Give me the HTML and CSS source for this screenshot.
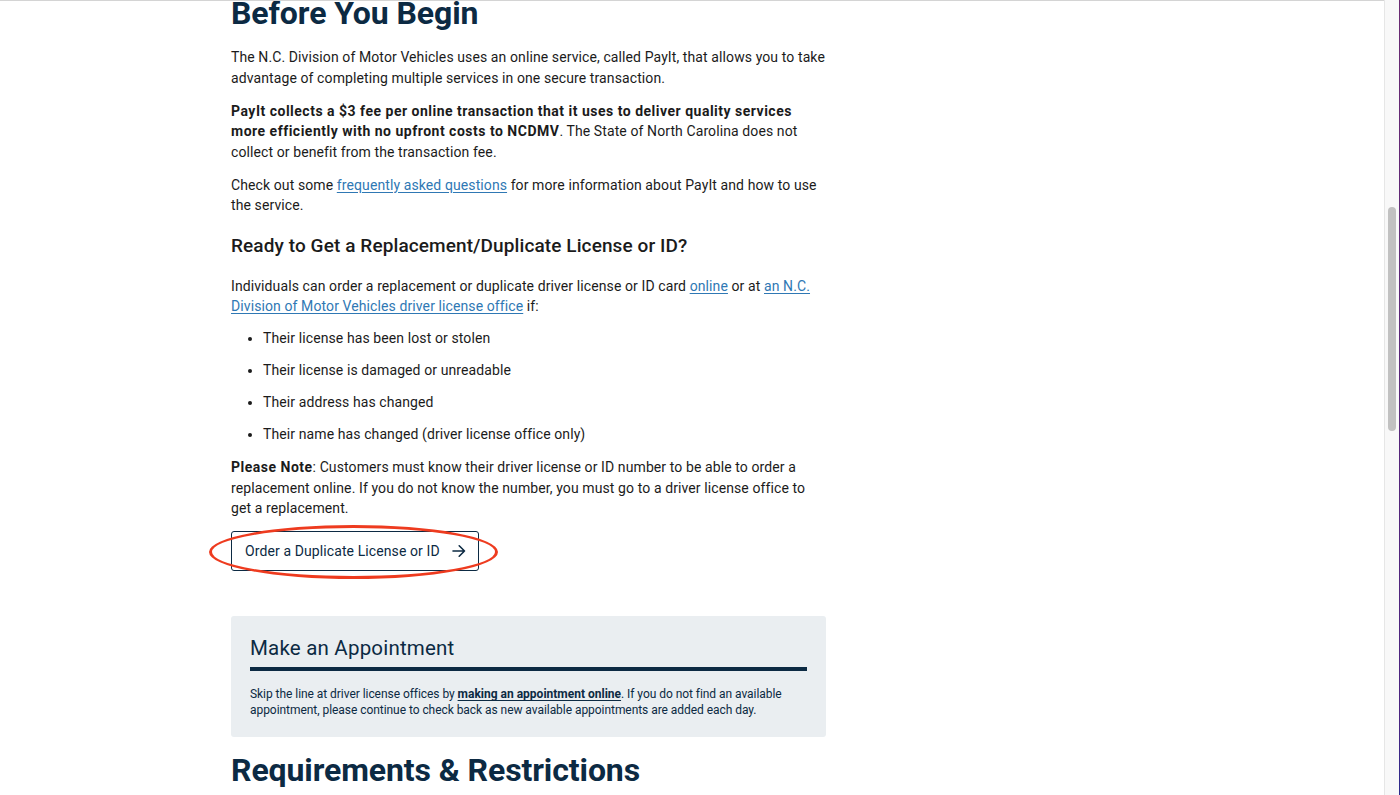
FILE: index.html
```html
<!DOCTYPE html>
<html lang="en">
<head>
<meta charset="utf-8">
<title>Replacement/Duplicate License or ID</title>
<link rel="stylesheet" href="styles.css">
</head>
<body>
<div class="window">
  <main class="page">
    <div class="content">
      <h2 class="h2 first">Before You Begin</h2>
      <p>The N.C. Division of Motor Vehicles uses an online service, called PayIt, that allows you to take advantage of completing multiple services in one secure transaction.</p>
      <p><strong>PayIt collects a $3 fee per online transaction that it uses to deliver quality services more efficiently with no upfront costs to NCDMV</strong>. The State of North Carolina does not collect or benefit from the transaction fee.</p>
      <p>Check out some <a href="#">frequently asked questions</a> for more information about PayIt and how to use the service.</p>
      <h3 class="h3">Ready to Get a Replacement/Duplicate License or ID?</h3>
      <p>Individuals can order a replacement or duplicate driver license or ID card <a href="#">online</a> or at <a href="#">an N.C. Division of Motor Vehicles driver license office</a> if:</p>
      <ul class="list">
        <li>Their license has been lost or stolen</li>
        <li>Their license is damaged or unreadable</li>
        <li>Their address has changed</li>
        <li>Their name has changed (driver license office only)</li>
      </ul>
      <p><strong>Please Note</strong>: Customers must know their driver license or ID number to be able to order a replacement online. If you do not know the number, you must go to a driver license office to get a replacement.</p>
      <div class="btn-wrap">
        <a class="btn" href="#">
          <span>Order a Duplicate License or ID</span>
          <svg class="arrow" width="14" height="14" viewBox="0 0 14 14" aria-hidden="true"><path d="M1 7h11.5M7.2 1.8 12.5 7l-5.3 5.2" fill="none" stroke="#0c2a43" stroke-width="1.6" stroke-linecap="round" stroke-linejoin="round"/></svg>
        </a>
        <span class="circle"></span>
      </div>
      <section class="callout">
        <h4 class="callout-title">Make an Appointment</h4>
        <div class="callout-rule"></div>
        <p class="callout-text">Skip the line at driver license offices by <a href="#">making an appointment online</a>. If you do not find an available appointment, please continue to check back as new available appointments are added each day.</p>
      </section>
      <h2 class="h2">Requirements &amp; Restrictions</h2>
    </div>
  </main>
  <div class="scrollbar"><div class="thumb"></div></div>
  <div class="edge"></div>
</div>
</body>
</html>
```
FILE: styles.css
```css
html, body {
  margin: 0;
  padding: 0;
  height: 100%;
  overflow: hidden;
  background: #fff;
}
.window {
  display: flex;
  height: 795px;
}
.page {
  flex: 1;
  border-top: 1px solid #d4d4d4;
  overflow: hidden;
  font-family: Roboto, "Liberation Sans", sans-serif;
  font-size: 14px;
  line-height: 20.5px;
  letter-spacing: 0.1px;
  color: #1b1b1b;
}
.content {
  width: 595px;
  margin-left: 231px;
}
.h2 {
  font-size: 32px;
  line-height: 38px;
  font-weight: 700;
  color: #0c2a43;
  letter-spacing: -0.1px;
  margin: 14px 0 0;
}
.h2.first {
  margin: -7px 0 15px;
}
p {
  margin: 0 0 12.5px;
}
strong {
  font-weight: 700;
  letter-spacing: 0.5px;
}
a {
  color: #2f78b4;
  text-decoration: underline;
  text-underline-offset: 2px;
}
.h3 {
  font-size: 19px;
  line-height: 24px;
  font-weight: 500;
  margin: 18px 0 18px;
  color: #1b1b1b;
  letter-spacing: 0.1px;
}
.list {
  margin: -1px 0 12.5px;
  padding-left: 32px;
}
.list li {
  margin-bottom: 11.5px;
}
.btn-wrap {
  position: relative;
  display: flex;
  width: fit-content;
}
.btn {
  display: inline-flex;
  align-items: center;
  gap: 12px;
  height: 38px;
  padding: 0 12px 0 13px;
  border: 1px solid #0c2a43;
  border-radius: 3px;
  color: #0c2a43;
  text-decoration: none;
}
.arrow {
  display: block;
}
.circle {
  position: absolute;
  left: -22px;
  top: -6px;
  width: 283px;
  height: 48px;
  border: 3.5px solid #ee3b1f;
  border-radius: 50%;
  pointer-events: none;
}
.callout {
  margin-top: 45px;
  background: #eaeef1;
  border-radius: 3px;
  padding: 19px 19px 19px;
}
.callout-title {
  margin: 0;
  font-size: 20.5px;
  line-height: 26px;
  font-weight: 400;
  color: #0c2a43;
  letter-spacing: 0.2px;
}
.callout-rule {
  height: 4px;
  background: #0c2a43;
  margin: 6px 0 15px;
}
.callout-text {
  margin: 0;
  font-size: 12px;
  line-height: 16px;
  color: #0c2a43;
  letter-spacing: -0.05px;
}
.callout-text a {
  color: #0c2a43;
  font-weight: 700;
  letter-spacing: 0;
}
.scrollbar {
  width: 14px;
  border-left: 1px solid #e6e6e6;
  background: #f8f8f8;
  display: flex;
  flex-direction: column;
  align-items: center;
  padding-top: 207px;
}
.thumb {
  width: 8px;
  height: 224px;
  border-radius: 4px;
  background: #c1c1c1;
}
.edge {
  width: 1px;
  background: linear-gradient(#6a2a72, #4a2380 90%, #2b2a8c);
}
```
